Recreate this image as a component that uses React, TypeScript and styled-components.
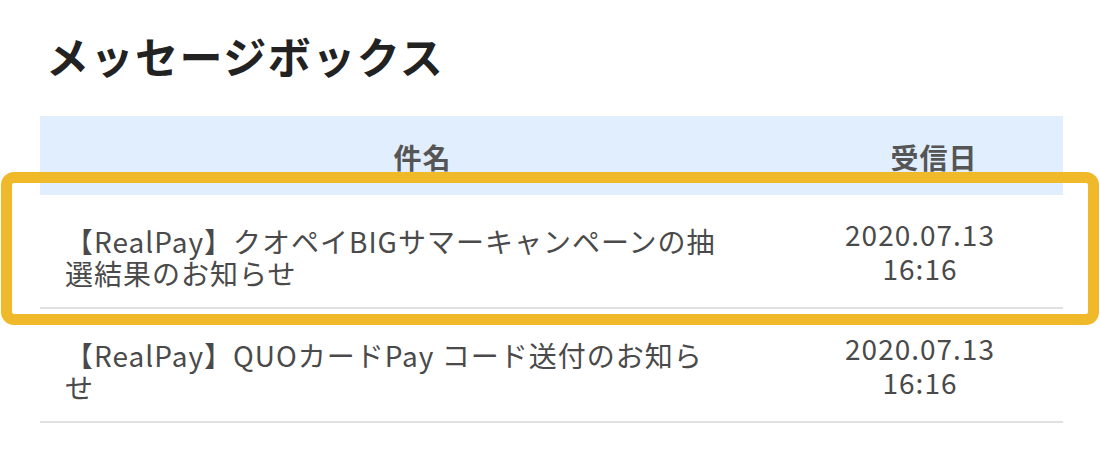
import React from "react";
import styled, { createGlobalStyle } from "styled-components";

const GlobalStyle = createGlobalStyle`
  body {
    margin: 0;
    background: #fff;
    font-family: "Noto Sans CJK JP", "Noto Sans", sans-serif;
    letter-spacing: 1px;
  }
`;

const Page = styled.div`
  width: 1100px;
  height: 463px;
  padding: 25px 0 0 40px;
  box-sizing: border-box;
  overflow: hidden;
`;

const Title = styled.h1`
  margin: 0 0 31px 6px;
  font-size: 43px;
  line-height: 60px;
  font-weight: 700;
  letter-spacing: 1.5px;
  color: #222;
`;

const Table = styled.div`
  width: 1023px;
`;

const HeadRow = styled.div`
  display: grid;
  grid-template-columns: 765px 258px;
  height: 79px;
  align-items: center;
  background: #e1eefd;
`;

const HeadCell = styled.div`
  text-align: center;
  font-size: 28px;
  font-weight: 700;
  color: #555;
  padding-top: 2px;
`;

const Row = styled.div`
  position: relative;
  display: grid;
  grid-template-columns: 765px 258px;
  align-items: center;
  height: 114px;
  box-sizing: border-box;
  border-bottom: 2px solid #e0e0e0;
`;

const Subject = styled.div`
  padding: 12px 78px 0 25px;
  font-size: 28px;
  line-height: 32px;
  color: #4a4a4a;
`;

const DateCell = styled.div`
  padding-right: 28px;
  text-align: center;
  font-size: 28px;
  line-height: 34px;
  color: #4a4a4a;
`;

const Highlight = styled.div`
  position: absolute;
  left: -39px;
  right: -36px;
  top: -23px;
  bottom: -18px;
  border: 11px solid #f0b92a;
  border-radius: 13px;
  pointer-events: none;
`;

const messages = [
  { subject: "【RealPay】クオペイBIGサマーキャンペーンの抽選結果のお知らせ", date: "2020.07.13", time: "16:16", active: true },
  { subject: "【RealPay】QUOカードPay コード送付のお知らせ", date: "2020.07.13", time: "16:16", active: false },
];

export default function App() {
  return (
    <>
      <GlobalStyle />
      <Page>
        <Title>メッセージボックス</Title>
        <Table>
          <HeadRow>
            <HeadCell>件名</HeadCell>
            <HeadCell>受信日</HeadCell>
          </HeadRow>
          {messages.map((m, i) => (
            <Row key={i}>
              <Subject>{m.subject}</Subject>
              <DateCell>
                {m.date}
                <br />
                {m.time}
              </DateCell>
              {m.active && <Highlight />}
            </Row>
          ))}
        </Table>
      </Page>
    </>
  );
}
